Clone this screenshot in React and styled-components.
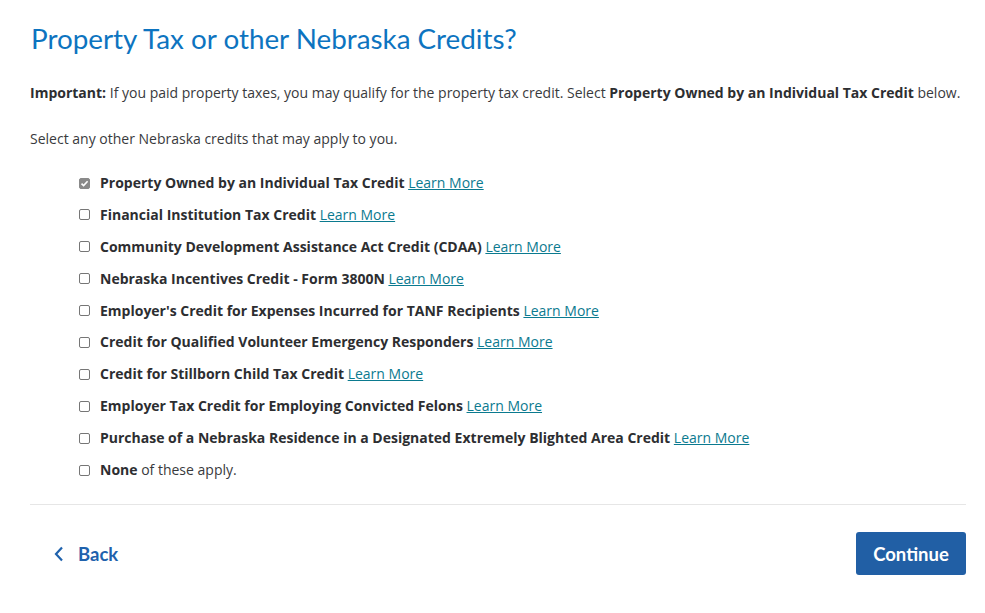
import React from "react";
import styled, { createGlobalStyle } from "styled-components";

const Global = createGlobalStyle`
  html, body { margin: 0; padding: 0; background: #fff; }
  body { font-family: "Open Sans", Lato, sans-serif; color: #393a3d; }
`;

const Page = styled.div`
  width: 985px;
  padding: 22px 19px 0 30px;
  box-sizing: border-box;
`;

const Title = styled.h1`
  margin: 0 0 0 1px;
  font-family: Lato, sans-serif;
  font-weight: 400;
  font-size: 27.8px;
  line-height: 34px;
  color: #0d74c0;
`;

const Para = styled.p`
  margin: ${(p) => p.$mt || 0}px 0 0 0;
  font-size: 14px;
  line-height: 20px;
  color: #393a3d;
  b { font-weight: 700; color: #2d2e31; }
`;

const List = styled.div`
  display: flex;
  flex-direction: column;
  gap: 11.9px;
  margin: 24px 0 0 49px;
`;

const Row = styled.label`
  display: flex;
  align-items: center;
  gap: 10px;
  font-size: 14px;
  line-height: 20px;
  color: #393a3d;
  b { font-weight: 700; color: #2d2e31; }
`;

const Box = styled.span`
  width: 11px;
  height: 11px;
  border-radius: 2px;
  box-sizing: border-box;
  border: 1px solid ${(p) => (p.$checked ? "#8a8a8a" : "#767676")};
  background: ${(p) => (p.$checked ? "#8a8a8a" : "#fff")};
  display: flex;
  align-items: center;
  justify-content: center;
  flex: none;
`;

const Link = styled.a`
  color: #0b7a8f;
  text-decoration: underline;
  cursor: pointer;
`;

const Divider = styled.hr`
  border: 0;
  border-top: 1px solid #e6e6e6;
  margin: 24px 0 0 0;
`;

const Footer = styled.div`
  display: flex;
  justify-content: space-between;
  align-items: center;
  margin-top: 27px;
`;

const BackBtn = styled.button`
  display: flex;
  align-items: center;
  gap: 14px;
  background: none;
  border: 0;
  padding: 0 0 0 24px;
  font-family: Lato, sans-serif;
  font-size: 18.5px;
  font-weight: 700;
  color: #1f62ad;
  cursor: pointer;
`;

const PrimaryBtn = styled.button`
  width: 110px;
  height: 43px;
  border: 0;
  border-radius: 3px;
  background: #215fa5;
  color: #fff;
  font-family: Lato, sans-serif;
  font-size: 18.5px;
  font-weight: 700;
  cursor: pointer;
`;

const items = [
  "Property Owned by an Individual Tax Credit",
  "Financial Institution Tax Credit",
  "Community Development Assistance Act Credit (CDAA)",
  "Nebraska Incentives Credit - Form 3800N",
  "Employer's Credit for Expenses Incurred for TANF Recipients",
  "Credit for Qualified Volunteer Emergency Responders",
  "Credit for Stillborn Child Tax Credit",
  "Employer Tax Credit for Employing Convicted Felons",
  "Purchase of a Nebraska Residence in a Designated Extremely Blighted Area Credit",
];

function Check({ checked }) {
  return (
    <Box $checked={checked}>
      {checked && (
        <svg width="9" height="9" viewBox="0 0 9 9">
          <path d="M1.5 4.6 L3.6 6.6 L7.6 2.2" fill="none" stroke="#fff" strokeWidth="1.6" />
        </svg>
      )}
    </Box>
  );
}

export default function App() {
  return (
    <>
      <Global />
      <Page>
        <Title>Property Tax or other Nebraska Credits?</Title>
        <Para $mt={27}>
          <b>Important:</b> If you paid property taxes, you may qualify for the property tax credit. Select{" "}
          <b>Property Owned by an Individual Tax Credit</b> below.
        </Para>
        <Para $mt={26}>Select any other Nebraska credits that may apply to you.</Para>
        <List>
          {items.map((t, i) => (
            <Row key={t}>
              <Check checked={i === 0} />
              <span>
                <b>{t}</b> <Link>Learn More</Link>
              </span>
            </Row>
          ))}
          <Row>
            <Check checked={false} />
            <span>
              <b>None</b> of these apply.
            </span>
          </Row>
        </List>
        <Divider />
        <Footer>
          <BackBtn>
            <svg width="10" height="16" viewBox="0 0 10 16">
              <path d="M8 1.5 L2 8 L8 14.5" fill="none" stroke="#1f62ad" strokeWidth="2.2" />
            </svg>
            Back
          </BackBtn>
          <PrimaryBtn>Continue</PrimaryBtn>
        </Footer>
      </Page>
    </>
  );
}
